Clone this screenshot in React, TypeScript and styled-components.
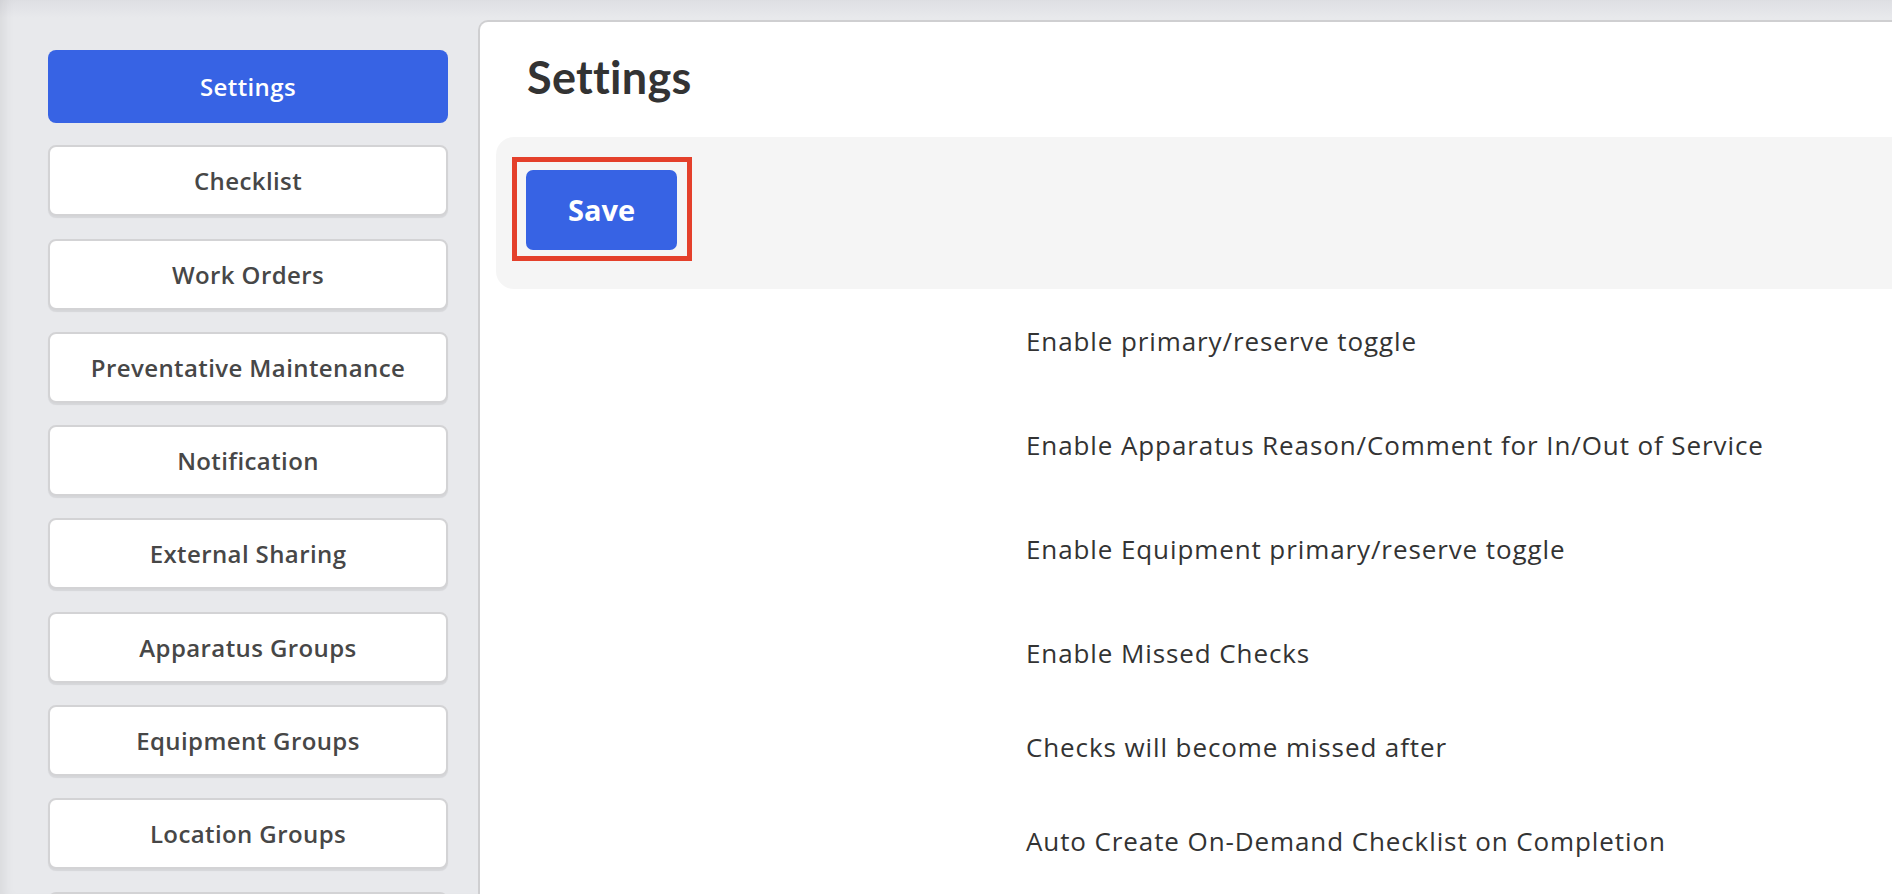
import React from "react";
import styled, { createGlobalStyle } from "styled-components";

const GlobalStyle = createGlobalStyle`
  html, body {
    margin: 0;
    padding: 0;
    height: 100%;
    overflow: hidden;
  }
  body {
    background: #e8e9ec;
    font-family: "Open Sans", "Noto Sans", sans-serif;
    -webkit-font-smoothing: antialiased;
  }
  * { box-sizing: border-box; }
`;

const Page = styled.div`
  display: flex;
  align-items: stretch;
  height: 100vh;
  overflow: hidden;
  padding-top: 20px;
  background: linear-gradient(to bottom, #dedfe3 0px, #e8e9ec 18px);
  box-shadow: inset 12px 0 12px -8px rgba(0, 0, 0, 0.07);
`;

const Sidebar = styled.nav`
  flex: 0 0 478px;
  display: flex;
  flex-direction: column;
  gap: 22.3px;
  padding: 30px 30px 0 48px;
`;

const NavButton = styled.button<{ $active?: boolean }>`
  flex: 0 0 auto;
  width: 400px;
  height: ${(p) => (p.$active ? "73px" : "71px")};
  border-radius: 8px;
  border: ${(p) => (p.$active ? "none" : "2px solid #d3d3d5")};
  background: ${(p) => (p.$active ? "#3763e4" : "#ffffff")};
  color: ${(p) => (p.$active ? "#ffffff" : "#474747")};
  box-shadow: ${(p) => (p.$active ? "none" : "0 2px 1px rgba(0, 0, 0, 0.08)")};
  font-family: "Open Sans", sans-serif;
  font-weight: 600;
  font-size: 24px;
  letter-spacing: 0.4px;
  display: flex;
  align-items: center;
  justify-content: center;
  padding: 0;
  cursor: pointer;
`;

const Main = styled.main`
  flex: 1 1 auto;
  min-width: 0;
  background: #ffffff;
  border-top: 2px solid #cfcfd1;
  border-left: 2px solid #cfcfd1;
  border-top-left-radius: 10px;
  padding-top: 29px;
`;

const Title = styled.h1`
  margin: 0 0 34px 47px;
  font-family: "Lato", "Open Sans", sans-serif;
  font-weight: 700;
  font-size: 45px;
  line-height: 52px;
  letter-spacing: 0.3px;
  color: #333333;
`;

const Toolbar = styled.div`
  margin-left: 16px;
  height: 152px;
  background: #f5f5f5;
  border-radius: 18px 0 0 18px;
  padding: 20px 0 0 16px;
  display: flex;
  align-items: flex-start;
`;

const Highlight = styled.div`
  border: 5px solid #e4402b;
  padding: 8px 10px 6px 9px;
`;

const SaveButton = styled.button`
  width: 151px;
  height: 80px;
  border: none;
  border-radius: 7px;
  background: #3763e4;
  color: #ffffff;
  font-family: "Open Sans", sans-serif;
  font-weight: 700;
  font-size: 29px;
  display: flex;
  align-items: center;
  justify-content: center;
  padding: 0 0 2px;
  cursor: pointer;
`;

const OptionList = styled.div`
  display: flex;
  flex-direction: column;
`;

const OptionRow = styled.div<{ $compact?: boolean }>`
  display: grid;
  grid-template-columns: 546px 1fr;
  height: ${(p) => (p.$compact ? "94px" : "104px")};
  padding-top: 35px;
`;

const OptionControl = styled.div``;

const OptionLabel = styled.div`
  font-family: "Open Sans", sans-serif;
  font-size: 26px;
  line-height: 34px;
  letter-spacing: 0.9px;
  color: #333333;
  white-space: nowrap;
`;

const navItems = [
  "Settings",
  "Checklist",
  "Work Orders",
  "Preventative Maintenance",
  "Notification",
  "External Sharing",
  "Apparatus Groups",
  "Equipment Groups",
  "Location Groups",
  "Inventory",
];

const options: { label: string; compact?: boolean }[] = [
  { label: "Enable primary/reserve toggle" },
  { label: "Enable Apparatus Reason/Comment for In/Out of Service" },
  { label: "Enable Equipment primary/reserve toggle" },
  { label: "Enable Missed Checks", compact: true },
  { label: "Checks will become missed after", compact: true },
  { label: "Auto Create On-Demand Checklist on Completion", compact: true },
];

export default function App() {
  return (
    <>
      <GlobalStyle />
      <Page>
        <Sidebar>
          {navItems.map((item, i) => (
            <NavButton key={item} $active={i === 0}>
              {item}
            </NavButton>
          ))}
        </Sidebar>
        <Main>
          <Title>Settings</Title>
          <Toolbar>
            <Highlight>
              <SaveButton>Save</SaveButton>
            </Highlight>
          </Toolbar>
          <OptionList>
            {options.map((o) => (
              <OptionRow key={o.label} $compact={o.compact}>
                <OptionControl />
                <OptionLabel>{o.label}</OptionLabel>
              </OptionRow>
            ))}
          </OptionList>
        </Main>
      </Page>
    </>
  );
}
